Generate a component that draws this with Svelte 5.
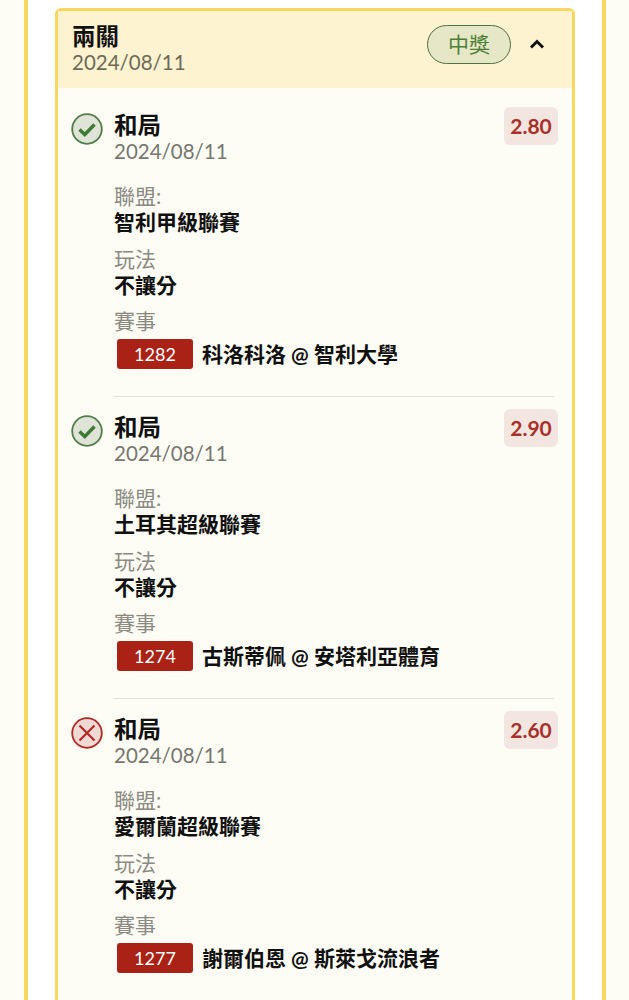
<script>
  const legs = [
    { won: true, odds: '2.80', league: '智利甲級聯賽', code: '1282', match: '科洛科洛 @ 智利大學' },
    { won: true, odds: '2.90', league: '土耳其超級聯賽', code: '1274', match: '古斯蒂佩 @ 安塔利亞體育' },
    { won: false, odds: '2.60', league: '愛爾蘭超級聯賽', code: '1277', match: '謝爾伯恩 @ 斯萊戈流浪者' },
  ];
</script>

<div class="page">
  <div class="panel">
    <div class="card">
      <div class="card-head">
        <div class="head-text">
          <div class="head-title">兩關</div>
          <div class="head-date">2024/08/11</div>
        </div>
        <span class="status">中獎</span>
        <svg class="chevron" width="16" height="12" viewBox="0 0 16 12">
          <path d="M2 9.5 L8 3.5 L14 9.5" fill="none" stroke="#111" stroke-width="3" />
        </svg>
      </div>

      <div class="legs">
        {#each legs as leg}
          <div class="leg">
            <div class="leg-icon">
              {#if leg.won}
                <svg width="32" height="32" viewBox="0 0 32 32">
                  <circle cx="16" cy="16" r="14.8" fill="#dfe3d8" stroke="#4f7f46" stroke-width="1.8" />
                  <path d="M8.5 16.5 L13.8 21.5 L23.5 11.5" fill="none" stroke="#3f7a35" stroke-width="3.4" />
                </svg>
              {:else}
                <svg width="32" height="32" viewBox="0 0 32 32">
                  <circle cx="16" cy="16" r="14.8" fill="#efd9d4" stroke="#b02a24" stroke-width="1.8" />
                  <path d="M8.5 8.5 L23.5 23.5 M23.5 8.5 L8.5 23.5" fill="none" stroke="#b02a24" stroke-width="2.2" />
                </svg>
              {/if}
            </div>
            <div class="leg-body">
              <div class="leg-top">
                <div>
                  <div class="leg-title">和局</div>
                  <div class="leg-date">2024/08/11</div>
                </div>
                <span class="odds">{leg.odds}</span>
              </div>
              <div class="field first">
                <div class="label">聯盟:</div>
                <div class="value">{leg.league}</div>
              </div>
              <div class="field">
                <div class="label">玩法</div>
                <div class="value">不讓分</div>
              </div>
              <div class="field">
                <div class="label">賽事</div>
                <div class="match">
                  <span class="code">{leg.code}</span>
                  <span class="value match-name">{leg.match}</span>
                </div>
              </div>
            </div>
          </div>
        {/each}
      </div>
    </div>
  </div>
</div>

<style>
  :global(body) {
    margin: 0;
    background: #fefdf5;
  }

  .page {
    height: 1000px;
    overflow: hidden;
    padding: 0 23px 0 24px;
    font-family: Lato, "Noto Sans CJK TC", sans-serif;
    color: #111;
  }

  .panel {
    background: #fff;
    border-left: 4px solid #f8d75f;
    border-right: 4px solid #f8d75f;
    padding: 8px 27px 0;
    height: 100%;
    box-sizing: border-box;
  }

  .card {
    border: 3px solid #f8d75f;
    border-bottom: none;
    border-radius: 6px 6px 0 0;
    background: #fefdf5;
    height: 100%;
  }

  .card-head {
    display: flex;
    align-items: center;
    height: 77px;
    padding: 0 27px 0 14px;
    background: #fdf3d0;
  }
  .head-text {
    flex: 1;
    padding-bottom: 4px;
  }
  .head-title {
    font-size: 23.5px;
    font-weight: 700;
    line-height: 28px;
  }
  .head-date {
    font-size: 20.5px;
    line-height: 24px;
    color: #6e6a58;
  }
  .status {
    box-sizing: border-box;
    width: 84px;
    height: 39px;
    line-height: 36px;
    margin: -11px 18px 0 0;
    text-align: center;
    font-size: 21px;
    color: #4f7f36;
    background: #e5e7c6;
    border: 1.5px solid #4f7040;
    border-radius: 20px;
  }
  .chevron {
    margin-top: -12px;
  }

  .legs {
    padding: 19px 18px 0 13px;
  }

  .leg {
    display: flex;
    height: 302px;
    box-sizing: border-box;
  }
  .leg-icon {
    width: 43px;
    flex: none;
    padding-top: 6px;
  }
  .leg-body {
    flex: 1;
    height: 290px;
    box-sizing: border-box;
    border-bottom: 1px solid #e2e0d8;
  }
  .leg:last-child .leg-body {
    border-bottom: none;
  }

  .leg-top {
    display: flex;
    justify-content: space-between;
    align-items: flex-start;
  }
  .leg-title {
    font-size: 23.5px;
    font-weight: 700;
    line-height: 26px;
    margin-top: 5px;
  }
  .leg-date {
    font-size: 20.5px;
    line-height: 27px;
    color: #77776f;
  }
  .odds {
    box-sizing: border-box;
    width: 54px;
    height: 38px;
    line-height: 38px;
    margin-right: -4px;
    text-align: center;
    font-size: 21px;
    font-weight: 700;
    color: #a8302b;
    background: #f3e6e0;
    border-radius: 6px;
  }

  .field {
    margin-top: 10.5px;
  }
  .field.first {
    margin-top: 18px;
  }
  .label {
    font-size: 21px;
    line-height: 25px;
    color: #8a8a82;
  }
  .value {
    font-size: 21px;
    font-weight: 700;
    line-height: 27px;
  }
  .match {
    display: flex;
    align-items: center;
    gap: 9px;
    margin-top: 6px;
    padding-left: 3px;
  }
  .match-name {
    margin-bottom: 1px;
  }
  .code {
    width: 76px;
    height: 30px;
    line-height: 30px;
    text-align: center;
    font-size: 18px;
    color: #fff;
    background: #aa2116;
    border-radius: 3px;
  }
</style>
